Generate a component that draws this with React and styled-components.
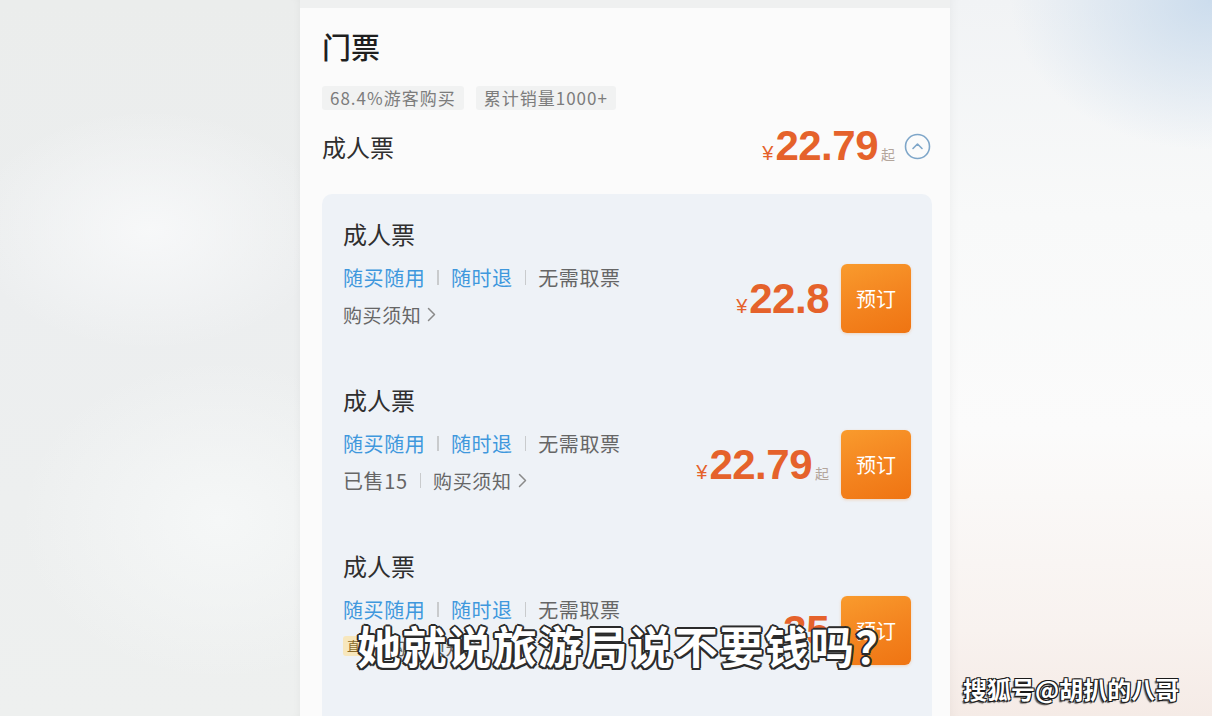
import React from 'react';
import styled, { createGlobalStyle } from 'styled-components';

const CJK = `"Noto Sans CJK SC", "Noto Sans", sans-serif`;
const NUM = `"Liberation Sans", Arial, "Noto Sans CJK SC", sans-serif`;

const TICKETS = [
  { price: '22.8', from: false, meta: [] },
  { price: '22.79', from: true, meta: ['已售15'] },
  { price: '35', from: false, meta: [], badge: '直营' },
];

const GlobalStyle = createGlobalStyle`
  html, body {
    margin: 0;
    padding: 0;
    background: #eceeed;
    overflow: hidden;
  }
  * { box-sizing: border-box; }
`;

const ChevronRight = () => (
  <svg width="9" height="15" viewBox="0 0 9 15" fill="none">
    <path d="M1.5 1.5 L7.5 7.5 L1.5 13.5" stroke="#8a8a8a" strokeWidth="1.5" strokeLinecap="round" strokeLinejoin="round" />
  </svg>
);

const CollapseIcon = () => (
  <svg width="27" height="27" viewBox="0 0 27 27" fill="none">
    <circle cx="13.5" cy="13.5" r="12" stroke="#7ea6c9" strokeWidth="1.6" />
    <path d="M9 15.5 L13.5 11 L18 15.5" stroke="#7ea6c9" strokeWidth="1.6" strokeLinecap="round" strokeLinejoin="round" />
  </svg>
);

const Price = ({ value, from }) => (
  <PriceWrap>
    <Yen>¥</Yen>
    <Amount>{value}</Amount>
    {from && <From>起</From>}
  </PriceWrap>
);

const TicketItem = ({ ticket }) => (
  <Item>
    <ItemTitle>成人票</ItemTitle>
    <ItemRow>
      <Info>
        <InfoLine>
          <Feature $blue>随买随用</Feature>
          <Sep />
          <Feature $blue>随时退</Feature>
          <Sep />
          <Feature>无需取票</Feature>
        </InfoLine>
        <InfoLine>
          {ticket.badge && <Badge>{ticket.badge}</Badge>}
          {ticket.meta.map((m) => (
            <React.Fragment key={m}>
              <Feature>{m}</Feature>
              <Sep />
            </React.Fragment>
          ))}
          <Notice>
            购买须知 <ChevronRight />
          </Notice>
        </InfoLine>
      </Info>
      <Buy>
        <Price value={ticket.price} from={ticket.from} />
        <BookButton>预订</BookButton>
      </Buy>
    </ItemRow>
  </Item>
);

export default function App() {
  return (
    <Page>
      <GlobalStyle />
      <LeftBlur />
      <Phone>
        <TopGap />
        <Section>
          <SectionTitle>门票</SectionTitle>
          <Tags>
            <Tag>68.4%游客购买</Tag>
            <Tag>累计销量1000+</Tag>
          </Tags>
          <HeadRow>
            <HeadName>成人票</HeadName>
            <HeadRight>
              <Price value="22.79" from />
              <CollapseIcon />
            </HeadRight>
          </HeadRow>
          <Card>
            {TICKETS.map((t, i) => (
              <TicketItem key={i} ticket={t} />
            ))}
          </Card>
        </Section>
      </Phone>
      <RightBlur>
        <Watermark>搜狐号@胡扒的八哥</Watermark>
      </RightBlur>
      <Subtitle>她就说旅游局说不要钱吗？</Subtitle>
    </Page>
  );
}

// --- STYLES ---

const Page = styled.div`
  position: relative;
  width: 1212px;
  height: 716px;
  display: grid;
  grid-template-columns: 300px 650px 1fr;
  overflow: hidden;
  font-family: ${CJK};
`;

const LeftBlur = styled.div`
  background:
    radial-gradient(ellipse 180px 120px at 150px 230px, rgba(248, 249, 250, 0.9), transparent),
    radial-gradient(ellipse 200px 160px at 220px 520px, rgba(246, 248, 248, 0.9), transparent),
    linear-gradient(180deg, #ebedec 0%, #eceeef 40%, #edefef 70%, #eef0ef 100%);
  box-shadow: inset -6px 0 8px -6px rgba(0, 0, 0, 0.05);
`;

const RightBlur = styled.div`
  display: flex;
  flex-direction: column;
  justify-content: flex-end;
  padding: 0 0 12px 13px;
  background:
    radial-gradient(ellipse 200px 150px at 260px 0px, rgba(200, 218, 236, 0.9), transparent),
    linear-gradient(180deg, #f1f3f5 0%, #f8f9f9 30%, #fbfbfb 60%, #f8f2ef 88%, #f5ebe6 100%);
  box-shadow: inset 8px 0 8px -6px rgba(0, 0, 0, 0.04);
`;

const Phone = styled.div`
  display: flex;
  flex-direction: column;
  background: #fbfbfb;
`;

const TopGap = styled.div`
  height: 8px;
  background: #eff0f0;
`;

const Section = styled.div`
  flex: 1;
  padding: 18px 18px 0 22px;
  display: flex;
  flex-direction: column;
`;

const SectionTitle = styled.div`
  font-size: 29px;
  line-height: 40px;
  color: #1f1f1f;
  font-weight: 500;
`;

const Tags = styled.div`
  display: flex;
  gap: 12px;
  margin-top: 20px;
`;

const Tag = styled.span`
  height: 24px;
  line-height: 24px;
  padding: 0 8px;
  font-size: 17px;
  letter-spacing: 1px;
  color: #7c7c7c;
  background: #f1f2f2;
  border-radius: 3px;
`;

const HeadRow = styled.div`
  display: flex;
  align-items: center;
  justify-content: space-between;
  height: 42px;
  margin-top: 15px;
`;

const HeadName = styled.div`
  font-size: 24px;
  color: #2f2f2f;
`;

const HeadRight = styled.div`
  display: flex;
  align-items: center;
  gap: 9px;
  margin-right: 1px;
`;

const PriceWrap = styled.div`
  display: flex;
  align-items: baseline;
  color: #e5622b;
  white-space: nowrap;
`;

const Yen = styled.span`
  font-family: ${NUM};
  font-size: 20px;
  font-weight: 400;
  margin-right: 2px;
`;

const Amount = styled.span`
  font-family: ${NUM};
  font-size: 42px;
  font-weight: 700;
  line-height: 42px;
  letter-spacing: -0.5px;
`;

const From = styled.span`
  font-size: 14px;
  color: #b3a59b;
  margin-left: 3px;
`;

const Card = styled.div`
  margin-top: 27px;
  flex: 1;
  background: #eef2f7;
  border-radius: 10px 10px 0 0;
  padding: 0 21px;
`;

const Item = styled.div`
  height: 166px;
  padding-top: 25px;
  display: flex;
  flex-direction: column;
`;

const ItemTitle = styled.div`
  font-size: 24px;
  line-height: 30px;
  color: #2f2f2f;
`;

const ItemRow = styled.div`
  margin-top: 15px;
  height: 69px;
  display: flex;
  align-items: center;
  justify-content: space-between;
`;

const Info = styled.div`
  align-self: flex-start;
  display: flex;
  flex-direction: column;
  gap: 11px;
`;

const InfoLine = styled.div`
  display: flex;
  align-items: center;
  height: 26px;
`;

const Feature = styled.span`
  font-size: 20px;
  letter-spacing: 0.6px;
  color: ${(p) => (p.$blue ? '#3f98dd' : '#666666')};
`;

const Sep = styled.span`
  width: 1.5px;
  height: 15px;
  margin: 0 12px;
  background: #c9cbcd;
`;

const Notice = styled.span`
  display: inline-flex;
  align-items: center;
  gap: 6px;
  font-size: 19px;
  letter-spacing: 0.6px;
  color: #666666;
`;

const Badge = styled.span`
  font-size: 13px;
  line-height: 20px;
  padding: 0 4px;
  color: #8a6a2a;
  background: #f7e7bd;
  border-radius: 3px;
  margin-right: 10px;
`;

const Buy = styled.div`
  display: flex;
  align-items: center;
  gap: 12px;
`;

const BookButton = styled.button`
  width: 70px;
  height: 69px;
  border: none;
  border-radius: 6px;
  background: linear-gradient(160deg, #f99b2d 0%, #f48520 50%, #ef7412 100%);
  color: #ffffff;
  font-family: ${CJK};
  font-size: 20px;
  padding: 0;
  box-shadow: 0 1px 3px rgba(240, 120, 20, 0.25);
`;

const Subtitle = styled.div`
  position: absolute;
  left: 357px;
  top: 617px;
  font-family: ${CJK};
  font-size: 44px;
  line-height: 56px;
  font-weight: 700;
  color: #ffffff;
  letter-spacing: 1.3px;
  text-shadow:
    2px 0 0 #2b2b2b, -2px 0 0 #2b2b2b, 0 2px 0 #2b2b2b, 0 -2px 0 #2b2b2b,
    1.5px 1.5px 0 #2b2b2b, -1.5px 1.5px 0 #2b2b2b, 1.5px -1.5px 0 #2b2b2b, -1.5px -1.5px 0 #2b2b2b;
`;

const Watermark = styled.div`
  font-family: ${CJK};
  font-size: 24px;
  line-height: 30px;
  font-weight: 700;
  color: #ffffff;
  white-space: nowrap;
  text-shadow:
    -1px 1px 0 #1a1a1a, 1px 1px 0 #1a1a1a, -1px -1px 0 #1a1a1a, 1px -1px 0 #1a1a1a,
    -2px 2px 1px rgba(0, 0, 0, 0.6);
`;
